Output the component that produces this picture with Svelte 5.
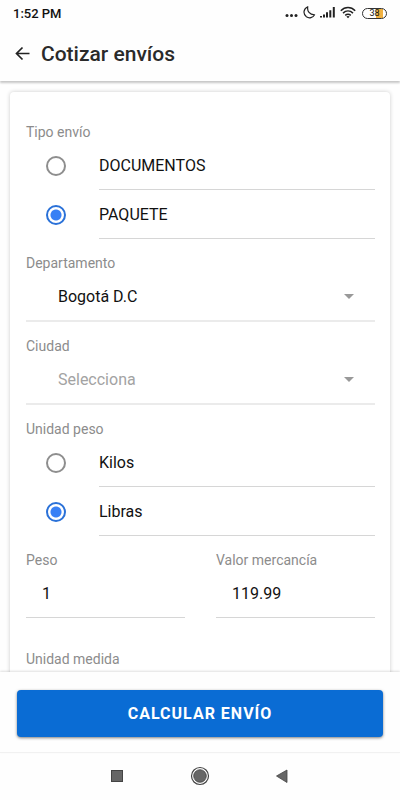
<script>
    let shipmentType = $state("paquete");
    let weightUnit = $state("libras");
    let department = $state("bogota");
    let city = $state("");
    let weight = $state("1");
    let goodsValue = $state("119.99");

    const shipmentTypes = [
        { value: "documentos", label: "DOCUMENTOS" },
        { value: "paquete", label: "PAQUETE" }
    ];

    const weightUnits = [
        { value: "kilos", label: "Kilos" },
        { value: "libras", label: "Libras" }
    ];
</script>

{#snippet caret()}
    <svg class="caret" width="10" height="5" viewBox="0 0 10 5" aria-hidden="true">
        <path d="M0 0h10L5 5z" fill="#999" />
    </svg>
{/snippet}

<div class="screen">
    <div class="status">
        <span class="time">1:52 PM</span>
        <div class="indicators">
            <svg width="14" height="14" viewBox="0 0 14 14">
                <circle cx="2" cy="9.500" r="1.500" />
                <circle cx="6.500" cy="9.500" r="1.500" />
                <circle cx="11" cy="9.500" r="1.500" />
            </svg>
            <svg width="13" height="14" viewBox="0 0 13 14">
                <path d="M4.800 .7C3.900 5.100 6.600 8.900 11.600 8.800C9.900 11.800 6.200 12.700 3.400 10.800C-.3 8.100 .4 2.500 4.800 .7z" fill="none" stroke="#222" stroke-width="1.200" stroke-linejoin="round" />
            </svg>
            <svg width="16" height="14" viewBox="0 0 16 14">
                <path d="M0 10h2v1.500H0zM3 8.500h2v3H3zM6 6.300h2v5.200H6zM9.300 4.300h2v7.200H9.300zM12.800 1h2v10.500H12.800z" />
            </svg>
            <svg width="16" height="14" viewBox="0 0 16 14">
                <g fill="none" stroke="#222" stroke-width="1.500">
                    <path d="M.8 4.700C5 .5 11 .5 15.200 4.700" />
                    <path d="M3 7.100C6 4.300 10 4.300 13 7.100" />
                    <path d="M5.200 9.400C7 7.900 9 7.900 10.800 9.400" />
                </g>
                <path d="M6.300 10.500L8 12.300L9.700 10.500C8.700 9.800 7.300 9.800 6.300 10.500z" />
            </svg>
            <span class="battery">38</span>
        </div>
    </div>

    <header>
        <button class="back" aria-label="Volver">
            <svg width="16" height="16" viewBox="0 0 16 16">
                <path d="M14.500 7.500H2M7.500 1.500L1.500 7.500L7.500 13.500" fill="none" stroke="#222" stroke-width="1.700" />
            </svg>
        </button>
        <h1>Cotizar envíos</h1>
    </header>

    <main>
        <form class="card" id="quote">
            <fieldset>
                <legend>Tipo envío</legend>
                {#each shipmentTypes as type}
                    <label class="option">
                        <input type="radio" name="type" value={type.value} bind:group={shipmentType} />
                        <span>{type.label}</span>
                    </label>
                {/each}
            </fieldset>

            <div class="field">
                <label for="department">Departamento</label>
                <div class="select">
                    <select id="department" bind:value={department}>
                        <option value="bogota">Bogotá D.C</option>
                    </select>
                    {@render caret()}
                </div>
            </div>

            <div class="field">
                <label for="city">Ciudad</label>
                <div class="select">
                    <select id="city" class:empty={city === ""} bind:value={city}>
                        <option value="">Selecciona</option>
                    </select>
                    {@render caret()}
                </div>
            </div>

            <fieldset>
                <legend>Unidad peso</legend>
                {#each weightUnits as unit}
                    <label class="option">
                        <input type="radio" name="unit" value={unit.value} bind:group={weightUnit} />
                        <span>{unit.label}</span>
                    </label>
                {/each}
            </fieldset>

            <div class="pair">
                <div class="field">
                    <label for="weight">Peso</label>
                    <input class="text" id="weight" inputmode="decimal" bind:value={weight} />
                </div>
                <div class="field">
                    <label for="value">Valor mercancía</label>
                    <input class="text" id="value" inputmode="decimal" bind:value={goodsValue} />
                </div>
            </div>

            <div class="section">Unidad medida</div>
        </form>
    </main>

    <footer>
        <button class="submit" type="submit" form="quote">CALCULAR ENVÍO</button>
    </footer>

    <nav>
        <button aria-label="Recientes">
            <svg width="20" height="20" viewBox="0 0 20 20">
                <rect x="3.500" y="4.500" width="11" height="11" fill="#666" stroke="#444" />
            </svg>
        </button>
        <button aria-label="Inicio">
            <svg width="20" height="20" viewBox="0 0 20 20">
                <circle cx="10" cy="10" r="8.500" fill="none" stroke="#444" stroke-width="1.200" />
                <circle cx="10" cy="10" r="6.300" fill="#666" stroke="#444" stroke-width=".8" />
            </svg>
        </button>
        <button aria-label="Atrás">
            <svg width="20" height="20" viewBox="0 0 20 20">
                <path d="M4.500 10L15 4v12.500z" fill="#666" stroke="#444" stroke-width=".8" />
            </svg>
        </button>
    </nav>
</div>

<style>
    :global(body) {
        margin: 0;
        background: #fefefe;
    }

    .screen {
        display: flex;
        flex-direction: column;
        height: 100vh;
        font-family: Roboto, "Open Sans", sans-serif;
        font-size: 16px;
        color: #111;
    }

    button {
        padding: 0;
        border: 0;
        background: none;
        font-family: inherit;
    }

    svg {
        display: block;
        fill: #222;
    }

    .status {
        display: flex;
        align-items: center;
        justify-content: space-between;
        height: 26px;
        padding: 0 13px;
    }

    .time {
        font-size: 13px;
        font-weight: 500;
    }

    .indicators {
        display: flex;
        align-items: center;
        gap: 4px;
    }

    .battery {
        box-sizing: border-box;
        width: 25px;
        height: 11px;
        margin-left: 2px;
        border: 1px solid #333;
        border-radius: 6px;
        background: linear-gradient(90deg, #fff 58%, #f0b040 58% 88%, #fff 88%);
        font-size: 9px;
        line-height: 9px;
        text-align: center;
    }

    header {
        display: flex;
        align-items: center;
        gap: 10px;
        height: 55px;
        padding: 0 15px;
        box-shadow: 0 2px 2px rgba(0, 0, 0, 0.22);
        z-index: 1;
    }

    h1 {
        margin: 0;
        font-size: 21px;
        font-weight: 500;
        line-height: 24px;
        color: #2a2a2a;
    }

    main {
        flex: 1;
        min-height: 0;
        padding: 11px 10px 0;
        overflow: hidden;
    }

    .card {
        padding: 16px 15px 32px 16px;
        border-radius: 4px;
        background: #fff;
        box-shadow: 0 0 4px rgba(0, 0, 0, 0.2);
    }

    fieldset {
        min-width: 0;
        margin: 0;
        padding: 15px 0 0;
        border: 0;
    }

    legend {
        float: left;
        width: 100%;
        padding: 0;
    }

    .field {
        padding-top: 15px;
    }

    legend,
    .field label,
    .section {
        display: block;
        font-size: 14px;
        line-height: 18px;
        color: #8c8c8c;
    }

    .option {
        display: flex;
        clear: both;
        align-items: center;
        gap: 33px;
        padding-left: 20px;
    }

    .option span {
        flex: 1;
        padding-top: 2px;
        border-bottom: 1px solid #d6d6d6;
        line-height: 46px;
    }

    .option input {
        appearance: none;
        box-sizing: border-box;
        width: 20px;
        height: 20px;
        margin: 0;
        border: 2px solid #8e8e8e;
        border-radius: 50%;
    }

    .option input:checked {
        border-color: #2a71d8;
        background: radial-gradient(circle, #3880f5 5px, #fff 6px);
    }

    .select {
        display: grid;
        align-items: center;
        border-bottom: 2px solid #ebebeb;
    }

    .select > :global(*) {
        grid-area: 1 / 1;
    }

    select,
    .text {
        box-sizing: border-box;
        width: 100%;
        border: 0;
        border-radius: 0;
        background: none;
        font: inherit;
        color: inherit;
    }

    select {
        appearance: none;
        height: 48px;
        padding: 0 32px;
    }

    select.empty {
        color: #a3a3a3;
    }

    .caret {
        justify-self: end;
        margin-right: 21px;
        pointer-events: none;
    }

    .text {
        height: 49px;
        padding: 0 16px;
        border-bottom: 1px solid #d6d6d6;
    }

    .pair {
        display: grid;
        grid-template-columns: 1fr 1fr;
        gap: 31px;
    }

    .section {
        padding-top: 32px;
    }

    footer {
        padding: 18px 17px 15px;
        border-bottom: 1px solid #f1f1f1;
        background: #fefefe;
        box-shadow: 0 -1px 2px rgba(0, 0, 0, 0.12);
        z-index: 1;
    }

    .submit {
        display: block;
        width: 100%;
        height: 47px;
        border-radius: 4px;
        background: #0a6cd4;
        box-shadow: 0 1px 3px rgba(0, 0, 0, 0.5);
        font-size: 16px;
        font-weight: 700;
        letter-spacing: 1px;
        color: #fff;
    }

    nav {
        display: flex;
        justify-content: center;
        gap: 62px;
        padding: 13px 0 14px;
    }
</style>
